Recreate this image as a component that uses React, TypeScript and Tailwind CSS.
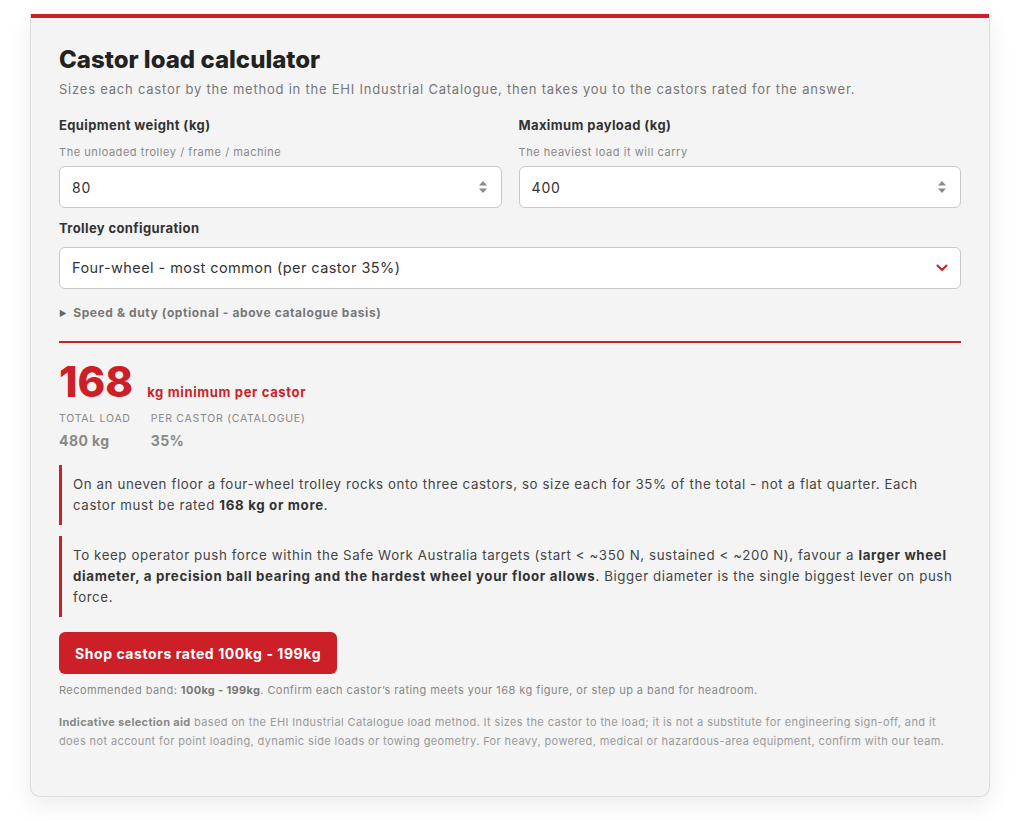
import { useState } from "react";

const body = { fontFamily: "Inter, 'Open Sans', sans-serif" };

function Spinner() {
  return (
    <svg className="pointer-events-none absolute right-[14px] top-[13px]" width="10" height="16" viewBox="0 0 10 16">
      <path d="M1 6.5 5 2l4 4.5z" fill="#8a8a8a" />
      <path d="M1 9.5 5 14l4-4.5z" fill="#8a8a8a" />
    </svg>
  );
}

function NumberField({ label, help, value, onChange }: { label: string; help: string; value: string; onChange: (v: string) => void }) {
  return (
    <div className="flex flex-col">
      <label className="text-[13px] font-bold leading-5 tracking-[0.03em] text-[#333]">{label}</label>
      <span className="mt-[9px] text-[11px] leading-4 tracking-[0.05em] text-[#888]">{help}</span>
      <div className="relative mt-[6px]">
        <input
          type="number"
          value={value}
          onChange={(e) => onChange(e.target.value)}
          className="h-[42px] w-full appearance-none rounded-[6px] border border-[#c8c8c8] bg-white px-3 text-[14px] tracking-[0.06em] text-[#333] outline-none [&::-webkit-inner-spin-button]:appearance-none [&::-webkit-outer-spin-button]:appearance-none"
        />
        <Spinner />
      </div>
    </div>
  );
}

export default function App() {
  const [equipment, setEquipment] = useState("80");
  const [payload, setPayload] = useState("400");
  const [config, setConfig] = useState("four");

  const total = (Number(equipment) || 0) + (Number(payload) || 0);
  const perCastor = Math.round(total * 0.35);

  return (
    <div className="min-h-screen bg-white pt-[14px] pb-6" style={body}>
      <div className="ml-[30px] w-[960px] rounded-b-[10px] border border-t-0 border-[#dcdcdc] bg-[#f4f4f4] shadow-[0_8px_24px_rgba(0,0,0,0.08)]">
        <div className="h-[4px] bg-[#cc1f27]" />
        <div className="px-[28px] pt-[26px] pb-[45px]">
          <h1 className="text-[24px] font-extrabold leading-8 text-[#222]">Castor load calculator</h1>
          <p className="mt-[3px] text-[13px] leading-5 tracking-[0.06em] text-[#777]">
            Sizes each castor by the method in the EHI Industrial Catalogue, then takes you to the castors rated for the answer.
          </p>

          <div className="mt-[16px] grid grid-cols-2 gap-[17px]">
            <NumberField label="Equipment weight (kg)" help="The unloaded trolley / frame / machine" value={equipment} onChange={setEquipment} />
            <NumberField label="Maximum payload (kg)" help="The heaviest load it will carry" value={payload} onChange={setPayload} />
          </div>

          <label className="mt-[10px] block text-[13px] font-bold leading-5 tracking-[0.03em] text-[#333]">Trolley configuration</label>
          <div className="relative mt-[9px]">
            <select
              value={config}
              onChange={(e) => setConfig(e.target.value)}
              className="h-[42px] w-full appearance-none rounded-[6px] border border-[#c8c8c8] bg-white px-3 text-[14.5px] tracking-[0.03em] text-[#333] outline-none"
            >
              <option value="four">Four-wheel - most common (per castor 35%)</option>
              <option value="three">Three-wheel (per castor 40%)</option>
              <option value="six">Six-wheel (per castor 25%)</option>
            </select>
            <svg className="pointer-events-none absolute right-[13px] top-[17px]" width="12" height="8" viewBox="0 0 12 8" fill="none">
              <path d="M1.5 1.5 6 6l4.5-4.5" stroke="#cc1f27" strokeWidth="2" strokeLinecap="round" strokeLinejoin="round" />
            </svg>
          </div>

          <details className="mt-[14px]">
            <summary className="flex cursor-pointer list-none items-center gap-[6px] text-[12px] font-bold leading-5 tracking-[0.05em] text-[#777] [&::-webkit-details-marker]:hidden">
              <span className="text-[8px] text-[#666]">▶</span>
              Speed &amp; duty (optional - above catalogue basis)
            </summary>
          </details>

          <div className="mt-[18px] h-[2px] bg-[#cc1f27]" />

          <div className="mt-[16px] flex items-baseline gap-[14px]">
            <span className="text-[42px] font-extrabold leading-[46px] text-[#cc1f27]">{perCastor}</span>
            <span className="text-[13px] font-bold tracking-[0.05em] text-[#cc1f27]">kg minimum per castor</span>
          </div>

          <div className="mt-[6px] flex gap-[20px]">
            <div className="flex flex-col">
              <span className="text-[10.5px] uppercase leading-4 tracking-[0.07em] text-[#888]">Total load</span>
              <span className="mt-[4px] text-[14px] font-bold leading-5 tracking-[0.03em] text-[#888]">{total} kg</span>
            </div>
            <div className="flex flex-col">
              <span className="text-[10.5px] uppercase leading-4 tracking-[0.07em] text-[#888]">Per castor (catalogue)</span>
              <span className="mt-[4px] text-[14px] font-bold leading-5 tracking-[0.03em] text-[#888]">35%</span>
            </div>
          </div>

          <div className="mt-[14px] border-l-[3px] border-[#cc1f27] py-[9px] pl-[11px] pr-[8px] text-[13.3px] leading-[21px] tracking-[0.045em] text-[#444]">
            On an uneven floor a four-wheel trolley rocks onto three castors, so size each for 35% of the total - not a flat quarter. Each castor must be rated <strong className="tracking-[0.05em] text-[#333]">{perCastor} kg or more</strong>.
          </div>

          <div className="mt-[11px] border-l-[3px] border-[#cc1f27] py-[9px] pl-[11px] pr-[8px] text-[13.3px] leading-[21px] tracking-[0.045em] text-[#444]">
            To keep operator push force within the Safe Work Australia targets (start &lt; ~350 N, sustained &lt; ~200 N), favour a <strong className="tracking-[0.05em] text-[#333]">larger wheel diameter, a precision ball bearing and the hardest wheel your floor allows</strong>. Bigger diameter is the single biggest lever on push force.
          </div>

          <button className="mt-[15px] h-[42px] rounded-[6px] bg-[#cc1f27] px-[16px] text-[14px] font-bold tracking-[0.04em] text-white">
            Shop castors rated 100kg - 199kg
          </button>

          <p className="mt-[8px] text-[11px] leading-4 tracking-[0.04em] text-[#888]">
            Recommended band: <strong className="tracking-[0.03em] text-[#777]">100kg - 199kg</strong>. Confirm each castor’s rating meets your {perCastor} kg figure, or step up a band for headroom.
          </p>

          <p className="mt-[15px] text-[11px] leading-[19px] tracking-[0.035em] text-[#999]">
            <strong className="tracking-[0.03em] text-[#888]">Indicative selection aid</strong> based on the EHI Industrial Catalogue load method. It sizes the castor to the load; it is not a substitute for engineering sign-off, and it does not account for point loading, dynamic side loads or towing geometry. For heavy, powered, medical or hazardous-area equipment, confirm with our team.
          </p>
        </div>
      </div>
    </div>
  );
}
